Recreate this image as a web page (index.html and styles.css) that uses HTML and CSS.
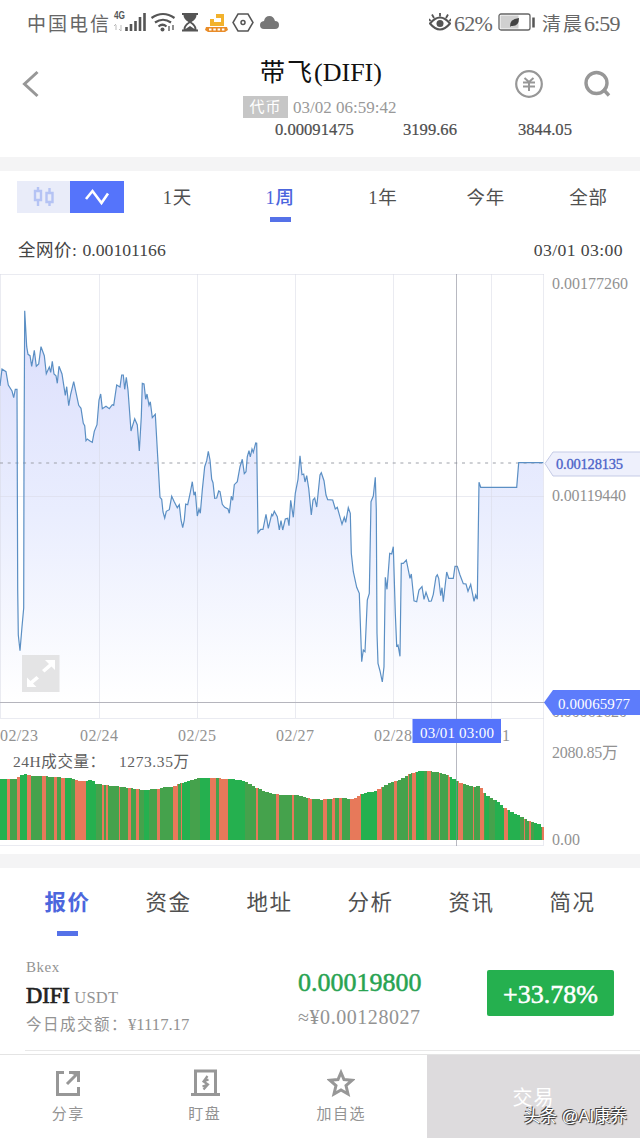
FILE: index.html
```html
<!DOCTYPE html>
<html lang="zh">
<head>
    <meta charset="UTF-8">
    <meta name="viewport" content="width=device-width, initial-scale=1.0">
    <title>带飞(DIFI)</title>
    <link rel="stylesheet" href="styles.css">
</head>
<body>
<div class="status-bar">
    <span class="carrier">中国电信</span>
    <svg class="status-icons" width="168" height="26" viewBox="0 0 168 26">
        <!--信号-->
        <text class="net" x="1" y="10" textLength="11" lengthAdjust="spacingAndGlyphs">4G</text>
        <path d="M3 16v5M1 17l2-2M8 16v6M6 20l2 2" stroke="#bbb" fill="none"/>
        <path d="M13.500 18v4M18 15v7M22.500 12v10M27 8v14M31.500 4v18" stroke="#555" stroke-width="2.600"/>
        <!--无线-->
        <g fill="none" stroke="#555" stroke-width="2.200">
            <path d="M38.500 9q11.500-8 23 0M42 13.500q8-5.500 16 0M45.500 17.500q4-3.500 8 0"/>
            <path d="M56 17v5M60 16v5" stroke-width="1.300"/>
        </g>
        <circle cx="49.500" cy="20.500" r="2" fill="#555"/>
        <path d="M69 4h16v2h-1.500q0 4-5 7 5 3 5 7.500H85v2H69v-2h1.500q0-4.500 5-7.500-5-3-5-7H69z" fill="#555"/>
        <path d="M72.500 20q0-3 4.500-6 4.500 3 4.500 6l-4.500-3z" fill="#fff"/>
        <!--推土机-->
        <path d="M97 10h4v3h7V9h-5V5h8v12H97z" fill="#f2b22d"/>
        <path d="M93 18h21l1 3-3 2H95l-3-2z" fill="#e98c28"/>
        <path d="M96 20.500h16" stroke="#fff" stroke-width="2" stroke-dasharray="2.500 1.800"/>
        <path d="M125 5h10l5 8.500-5 8.500h-10l-5-8.500z" fill="none" stroke="#555" stroke-width="1.500"/>
        <circle cx="130" cy="13.500" r="2" fill="none" stroke="#555" stroke-width="1.500"/>
        <path d="M151 20q-4 0-4-4 0-3.500 4-4 1-5 5.500-5 4 0 5.500 5 4 0 4 4t-4 4z" fill="#777"/>
    </svg>
    <svg class="eye" width="22" height="20" viewBox="0 0 22 20">
        <path d="M1 11.500q10-12 20 0-10 12-20 0z" fill="none" stroke="#555" stroke-width="2"/>
        <circle cx="11" cy="11.500" r="3.500" fill="#555"/>
        <path d="M11 4.500V1M5 6L3 2.500M17 6l2-3.500M1.500 9L0 7M20.500 9L22 7" stroke="#555" stroke-width="1.800"/>
    </svg>
    <span class="percent">62%</span>
    <svg class="battery" width="37" height="18" viewBox="0 0 37 18">
        <rect x="1" y="1" width="31" height="16" rx="2" fill="#fff" stroke="#666" stroke-width="1.300"/>
        <rect x="2.500" y="2.500" width="18" height="13" fill="#d0d0d0"/>
        <path d="M12 14q-1-8 9-9 0 9-8 8z" fill="#444"/>
        <path d="M35.500 4.500v10" stroke="#555" stroke-width="2.500"/>
    </svg>
    <span class="clock"><i>清晨</i>6:59</span>
</div>

<div class="header">
    <svg class="back" width="18" height="28" viewBox="0 0 18 28">
        <path d="M15.500 2L2.500 14l13 12" fill="none" stroke="#979797" stroke-width="3"/>
    </svg>
    <div class="title-box">
        <h1><i>带飞</i>(DIFI)</h1>
        <p><span class="stamp">代币</span><span class="date">03/02 06:59:42</span></p>
    </div>
    <svg class="coin" width="28" height="28" viewBox="0 0 28 28">
        <g fill="none" stroke="#979797">
            <circle cx="14" cy="14" r="12.800" stroke-width="2.200"/>
            <path d="M9.500 8l4.500 4 4.500-4M8 12.500h12M8 16.500h12M14 12v9" stroke-width="2"/>
        </g>
    </svg>
    <svg class="search" width="27" height="28" viewBox="0 0 27 28">
        <g fill="none" stroke="#979797" stroke-width="3.400">
            <circle cx="12.500" cy="13" r="10.500"/>
            <path d="M19 19l6 6.500"/>
        </g>
    </svg>
</div>
<div class="stats">
    <span>0.00091475</span>
    <span>3199.66</span>
    <span>3844.05</span>
</div>
<div class="band"></div>

<div class="range-bar">
    <div class="toggle">
        <span>
            <svg width="22" height="22" viewBox="0 0 22 22">
                <g fill="none" stroke="#b5c3f4" stroke-width="2.400">
                    <path d="M5 1v4M5 14v6M2 5h6v9H2zM16.500 2v5M16.500 16v4M13.500 7h6v9h-6z"/>
                </g>
            </svg>
        </span>
        <span class="on">
            <svg width="26" height="20" viewBox="0 0 26 20">
                <path d="M2 12l6.500-8 9 12L24 6.500" fill="none" stroke="#fff" stroke-width="2.600"/>
            </svg>
        </span>
    </div>
    <ul class="tabs">
        <li>1天</li>
        <li class="active">1周</li>
        <li>1年</li>
        <li>今年</li>
        <li>全部</li>
    </ul>
</div>
<div class="price-line">
    <span><i>全网价:</i> 0.00101166</span>
    <span class="time">03/01 03:00</span>
</div>

<svg class="chart" width="640" height="580" viewBox="0 274 640 580">
    <defs>
        <linearGradient id="fade" gradientUnits="userSpaceOnUse" x1="0" y1="320" x2="0" y2="700">
            <stop offset="0" stop-color="#dcdffc"/>
            <stop offset="0.500" stop-color="#e9edfe"/>
            <stop offset="1" stop-color="#fff"/>
        </linearGradient>
    </defs>
    <path id="area" fill="url(#fade)"/>
    <path class="grid" d="M0 274.500H544M0 496.500H544M0 718.500H544M0 845.500H544M.5 274V718M99.500 274V718M197.500 274V718M295.500 274V718M393.500 274V718M491.500 274V718M543.500 274V845"/>
    <path d="M0 463H544" stroke="#9da0a8" stroke-dasharray="3 4.700"/>
    <path id="line" fill="none" stroke="#5b8fc4" stroke-width="1.200"/>
    <g id="bars" shape-rendering="crispEdges"></g>
    <path d="M456.500 274V846" stroke="#888a98" stroke-opacity="0.600"/>
    <path d="M0 702.500H545" stroke="#b5b5bd"/>

    <!--全屏按钮-->
    <rect x="22" y="655" width="37.500" height="37" fill="#dfdfe0" opacity="0.850"/>
    <path d="M45 660h10v10l-3.500-3.500-7 6-2.500-2.500 7-6zM36.500 687H27V677.500l3.500 3.500 6-5 2.500 2.500-6 5z" fill="#fff"/>

    <g class="axis">
        <text x="552" y="289" textLength="76">0.00177260</text>
        <text x="552" y="501" textLength="74">0.00119440</text>
        <text x="552" y="717" textLength="75">0.00061620</text>
        <text x="552" y="758" textLength="66">2080.85万</text>
        <text x="552" y="845" textLength="28">0.00</text>
        <text x="0" y="741" textLength="38">02/23</text>
        <text x="80" y="741" textLength="38">02/24</text>
        <text x="178" y="741" textLength="38">02/25</text>
        <text x="276" y="741" textLength="38">02/27</text>
        <text x="374" y="741" textLength="38">02/28</text>
        <text x="472" y="741" textLength="38">03/01</text>
        <text class="volume" x="13" y="767" textLength="92">24H成交量：</text>
        <text class="volume" x="119" y="767" textLength="70">1273.35万</text>
    </g>
    <path d="M545 463.500L553 452H641V476H553z" fill="#eef0fc" stroke="#c5cbe6"/>
    <text class="mark blue" x="556" y="469" textLength="67">0.00128135</text>
    <path d="M544 702.500L553 690H640V715H553z" fill="#5d7cfb"/>
    <text class="mark" x="558" y="709" textLength="72">0.00065977</text>
    <rect x="412.500" y="719" width="88.500" height="24" fill="#5574fb"/>
    <text class="mark" x="420" y="738" textLength="74">03/01 03:00</text>
</svg>
<div class="band"></div>

<ul class="tabs main-tabs">
    <li class="active">报价</li>
    <li>资金</li>
    <li>地址</li>
    <li>分析</li>
    <li>资讯</li>
    <li>简况</li>
</ul>

<div class="quote">
    <div class="pair">
        <p class="exchange">Bkex</p>
        <p class="symbol"><b>DIFI</b> USDT</p>
        <p class="turnover"><i>今日成交额：</i>¥1117.17</p>
    </div>
    <div class="price">
        <p class="now">0.00019800</p>
        <p class="cny">≈¥0.00128027</p>
    </div>
    <span class="change">+33.78%</span>
</div>

<div class="footer">
    <div class="action">
        <svg width="26" height="28" viewBox="0 0 26 28">
            <path d="M9 3.500H2.500v22h21V18M22 5L12 15" fill="none" stroke="#979797" stroke-width="3"/>
            <path d="M14 2h11v11h-3V7l-5-2h-3z" fill="#979797"/>
        </svg>
        <span>分享</span>
    </div>
    <div class="action">
        <svg width="30" height="28" viewBox="0 0 30 28">
            <path d="M5.500 25V2h20v23M1 25.500h29" fill="none" stroke="#979797" stroke-width="3"/>
            <path d="M17.500 7l-4 5.500 4.500 3-4.500 5M18.500 10.500l-5 2M18 15.500l-5.500 2" fill="none" stroke="#979797" stroke-width="2.200"/>
        </svg>
        <span>盯盘</span>
    </div>
    <div class="action">
        <svg width="28" height="28" viewBox="0 0 28 28">
            <path d="M14 3.500l3 7 8 .8-6 5.200 2 8.500-7-4-7 4 2-8.500-6-5.200 8-.8z" fill="none" stroke="#979797" stroke-width="3"/>
        </svg>
        <span>加自选</span>
    </div>
    <div class="trade">交易</div>
    <span class="watermark">头条 @AI康养</span>
</div>
<script src="chart.js"></script>
</body>
</html>
```
FILE: styles.css
```css
* {
    margin: 0;
    padding: 0;
    box-sizing: border-box;
}

body {
    width: 640px;
    height: 1138px;
    overflow: hidden;
    background: #fff;
    color: #505050;
    font-family: "Liberation Serif", "Noto Sans CJK SC", serif;
    font-weight: 400;
}

svg {
    display: block;
    flex: none;
}

i {
    font-style: normal;
}

ul {
    list-style: none;
}

.status-bar {
    display: flex;
    align-items: center;
    height: 44px;
    padding-left: 27px;
    color: #666;
    white-space: nowrap;
}

.carrier {
    width: 86px;
    font-size: 19px;
    letter-spacing: 2px;
}

.status-icons {
    margin-top: -1px;
}

.net {
    font: bold 10px "Liberation Sans", sans-serif;
    fill: #555;
}

.eye {
    margin-left: 148px;
}

.percent {
    width: 40px;
    margin: 3px 0 0 3px;
    font-size: 22px;
    letter-spacing: -0.700px;
}

.battery {
    margin-left: 4px;
}

.clock {
    margin: 2px 0 0 7px;
    font-size: 22px;
    letter-spacing: -0.900px;
}

.clock i {
    font-size: 19px;
    letter-spacing: 2px;
}

.header {
    display: flex;
    height: 76px;
}

.back {
    margin: 26px 0 0 22px;
}

.title-box {
    width: 300px;
    margin-left: 131px;
    text-align: center;
}

h1 {
    height: 52px;
    color: #111;
    font-size: 26px;
    font-weight: 400;
    line-height: 58px;
}

h1 i {
    font-size: 25px;
    letter-spacing: 2px;
}

.title-box p {
    display: flex;
    align-items: center;
    gap: 5px;
    padding-left: 72px;
}

.stamp {
    width: 45px;
    height: 22px;
    background: #c6c6c6;
    color: #fff;
    font-size: 15px;
    letter-spacing: 1px;
    line-height: 23px;
}

.date {
    padding-top: 2px;
    color: #999;
    font-size: 17px;
}

.coin {
    margin: 26px 0 0 44px;
}

.search {
    margin: 26px 0 0 41px;
}

.stats {
    display: flex;
    height: 37px;
    padding-left: 275px;
    font-size: 16.600px;
    line-height: 19px;
    -webkit-text-stroke: 0.200px #444;
}

.stats span:nth-child(1) {
    width: 128px;
}

.stats span:nth-child(2) {
    width: 115px;
}

.band {
    height: 14px;
    background: #f4f4f5;
}

.range-bar {
    display: flex;
    height: 55px;
}

.toggle {
    display: flex;
    width: 107px;
    height: 32px;
    margin: 10px 2px 0 17px;
}

.toggle span {
    display: flex;
    align-items: center;
    justify-content: center;
    width: 53px;
    background: #e9ecf9;
}

.toggle .on {
    width: 54px;
    background: #5574fb;
}

.tabs {
    display: flex;
    flex: 1;
}

.tabs li {
    display: flex;
    flex: 1;
    flex-direction: column;
    align-items: center;
    font-size: 18.500px;
    letter-spacing: 0.800px;
    line-height: 46px;
    padding-top: 4px;
}

.tabs .active {
    color: #4c66dd;
    font-weight: 500;
}

.tabs .active::after {
    content: "";
    width: 21px;
    height: 5px;
    margin-top: -4px;
    background: #5571e8;
}

.price-line {
    display: flex;
    justify-content: space-between;
    height: 48px;
    padding: 0 17px 0 18px;
    font-size: 17.700px;
    line-height: 48px;
}

.price-line span {
    color: #444;
}

.price-line i {
    display: inline-block;
    width: 60px;
    font-size: 17.500px;
    letter-spacing: 0.500px;
}

.price-line .time {
    letter-spacing: 0.380px;
}

.grid {
    fill: none;
    stroke: #d9dae6;
    stroke-opacity: 0.550;
}

.axis {
    fill: #929292;
    font-size: 16px;
}

.axis .volume {
    fill: #606060;
    font-size: 15.500px;
}

.mark {
    fill: #fff;
    font-size: 15px;
}

.mark.blue {
    fill: #4a62c8;
    stroke: #4a62c8;
    stroke-width: 0.300px;
    font-size: 14.500px;
}

.main-tabs {
    height: 83px;
    padding: 0 17px;
}

.main-tabs li {
    padding-top: 7px;
    font-size: 21.500px;
    letter-spacing: 1.500px;
    line-height: 56px;
}

.main-tabs .active {
    font-weight: 700;
}

.main-tabs .active::after {
    margin-top: 0;
}

.quote {
    display: flex;
    height: 100px;
    margin-left: 25px;
    border-bottom: 1px solid #e8e8e8;
    color: #939393;
    white-space: nowrap;
}

.pair {
    width: 273px;
    padding: 6px 0 0 1px;
}

.exchange {
    font-size: 15px;
    line-height: 20px;
    letter-spacing: 0.500px;
}

.symbol {
    font-size: 16.500px;
    line-height: 38px;
    letter-spacing: 0.300px;
}

.symbol b {
    color: #222;
    font-size: 22.500px;
    font-weight: 400;
    letter-spacing: 0;
    -webkit-text-stroke: 0.700px #222;
}

.turnover {
    font-size: 16.700px;
    line-height: 16px;
}

.turnover i {
    display: inline-block;
    width: 102px;
    font-size: 15.500px;
    letter-spacing: 1.500px;
}

.price {
    width: 189px;
    padding-top: 15px;
}

.now {
    color: #28a352;
    font-size: 26px;
    line-height: 34px;
    -webkit-text-stroke: 0.500px #28a352;
}

.cny {
    font-size: 20px;
    letter-spacing: 0.550px;
    line-height: 34px;
}

.change {
    width: 127px;
    height: 46px;
    margin-top: 19px;
    border-radius: 2px;
    background: #25b04f;
    color: #fff;
    font-size: 26px;
    line-height: 50px;
    text-align: center;
    -webkit-text-stroke: 0.500px #fff;
}

.footer {
    display: flex;
    position: relative;
    height: 85px;
    margin-top: 3px;
    border-top: 1px solid #e4e4e4;
}

.action {
    display: flex;
    flex-direction: column;
    align-items: center;
    width: 136.500px;
    padding-top: 14px;
    color: #939393;
    font-size: 15px;
    letter-spacing: 1.500px;
    line-height: 35px;
}

.trade {
    width: 213px;
    margin-left: auto;
    background: #dddbdd;
    color: #fff;
    font-size: 20px;
    letter-spacing: 1px;
    line-height: 86px;
    text-align: center;
}

.watermark {
    position: absolute;
    right: 13px;
    top: 49px;
    color: #fff;
    font: 16.500px/25px "Liberation Sans", "Noto Sans CJK SC", sans-serif;
    text-shadow: -1px -1px 0 #444, 1px 1px 1px #222;
}
```
FILE: chart.js
```js
// 价格走势，每段坐标以 1/3 像素为单位
const segments = [
    {
        x: 0, y: 290, points: "0,288 6,237 18,245 25,285 36,303 41,323 46,298 51,298 53,900 55,1035 60,1082 66,1010 71,954 72,500 74,62 80,170 84,193 90,197 95,229 103,181 109,229 116,222 123,170 133,197 139,251 148,231 152,247 157,214 162,252 168,257 172,280 177,229 186,252 196,316 200,290 206,347 212,312 221,275 236,346 243,355 250,400 254,407 258,452 262,447 270,453 277,457 283,424 291,404 297,330 302,312 307,356 318,349 328,356 337,344 341,346 350,285 360,291 365,255 370,255 374,298 379,262 384,300 393,423 404,386 412,405 418,483 424,380 427,280 432,282 437,328 441,312 447,346 451,335 457,383 466,373 473,500 480,622 485,628 489,666 494,684 499,664 508,659 515,619 522,634 532,653 538,644 543,690 548,713 553,690 557,642 563,644 570,612 577,575 582,616 586,605 592,678 597,657 601,670 607,600 614,530 620,512 625,484 630,510 635,568 639,578 644,625 650,624 656,603 660,605 667,643 674,652 684,657 688,670 694,619 698,631 703,584 712,575 720,530 727,508 733,551 738,545 742,500 747,482 751,501 756,477 760,487 767,459"
    },
    {
        x: 240, y: 400, points: "50,130 54,398 62,388 69,388 78,343 85,385 95,343 98,347 103,334 112,350 118,390 123,362 128,390 136,357 143,355 147,377 152,301 160,352 166,280 174,238 180,167 186,224 191,222 195,246 200,227 206,265 214,345 219,300 224,294 230,321 240,225 244,218 252,242 258,285 263,299 278,300 286,327 292,322 306,373 313,352 317,367 325,323 331,340 334,460 340,515 350,562 358,580 362,700 365,785 370,750 375,755 382,600 388,580 393,305 400,288 406,232 409,330 411,700 414,790 420,813 427,846 432,800 436,532 441,568 449,460 455,462 460,440 466,640 470,738 474,735 480,769 484,490 490,490 499,480 510,535 514,522 522,602 530,605 537,570 546,560 552,598 558,577 567,604 574,603 580,583 588,530 592,524 596,535 602,587 606,563 610,605 620,516 626,535 640,535 645,499 652,499 660,525 670,551 678,552 684,574 692,553 702,604 707,585 712,598 717,247 722,262 830,262 836,188 910,188"
    }
];
const line = segments.map(s => s.points.split(" ").map(p => {
    const [x, y] = p.split(",");
    return (s.x + x / 3).toFixed(1) + " " + (s.y + y / 3).toFixed(1);
}).join("L")).join("L");
document.getElementById("line").setAttribute("d", "M" + line);
document.getElementById("area").setAttribute("d", "M" + line + "V702H0Z");

// 成交量轮廓：[x, 顶部 y]
const tops = [[0, 779.3], [17, 778.7], [20, 775], [25, 774.3], [30, 775.7], [53, 776.7], [70, 778], [78, 780.7], [93, 780.3], [96, 784], [113, 785.7], [127, 787.7], [143, 789.7], [155, 789.3], [163, 787.3], [173, 786.7], [178, 784], [187, 781], [200, 778], [233, 778.7], [247, 782.3], [257, 788.3], [270, 792.7], [280, 795], [297, 794.7], [307, 798], [320, 799.7], [340, 797.7], [352, 799.3], [362, 794.3], [378, 790], [387, 784.3], [400, 779.3], [410, 773.3], [425, 770.3], [435, 771.7], [447, 775.3], [460, 782.3], [475, 786.7], [479, 785.3], [485, 794], [497, 801], [507, 809.3], [520, 816], [533, 822.7], [538, 823.7], [544, 827.7]];
// 下跌和放量区间，其余为普通上涨
const down = [[6.7, 10.3], [16.7, 19.7], [26.7, 31], [42.3, 45.7], [54, 56.7], [60.7, 65], [75, 86], [101.7, 103.7], [106.3, 107.7], [119, 120.3], [128, 131], [136, 138.7], [156.7, 160], [173, 177.7], [180.7, 182.3], [210, 215.7], [219.3, 228.3], [256, 258], [276, 279], [292.3, 294], [307.7, 311.7], [322.7, 327.3], [332, 335], [338.7, 341.7], [350, 361], [377.3, 382], [394, 397], [408, 409.3], [412.3, 416], [426.7, 430.7], [439, 440], [448.3, 450], [458.3, 462.7], [473, 474.3], [480, 484.3], [504.3, 507.7], [524, 525.3], [529.3, 531.3], [541.7, 544]];
const rise = [[0, 6.7], [19.7, 26.7], [65, 71], [86, 96], [144, 149], [182.3, 190], [200, 210], [228.3, 245], [361, 377.3], [416, 424], [450, 458.3], [485, 489], [495, 504], [508, 520], [534, 541]];

function topAt(x) {
    for (let i = 1; i < tops.length; i++) {
        const [x0, y0] = tops[i - 1];
        const [x1, y1] = tops[i];
        if (x <= x1)
            return y0 + (y1 - y0) * (x - x0) / (x1 - x0);
    }
    return tops[tops.length - 1][1];
}

function inside(list, x) {
    return list.some(r => x >= r[0] && x < r[1]);
}

let cuts = [0, 544];
for (let x = 3.4; x < 544; x += 3.4)
    cuts.push(x);
down.concat(rise).forEach(r => cuts.push(r[0], r[1]));
cuts = [...new Set(cuts)].sort((a, b) => a - b);
let bars = "";
for (let i = 1; i < cuts.length; i++) {
    const x = cuts[i - 1];
    const mid = (x + cuts[i]) / 2;
    const color = inside(down, mid) ? "#e7795a" : inside(rise, mid) ? "#25b04f" : "#45a24c";
    // 以 3.4 像素为一档取高度，保留阶梯
    const y = topAt(Math.floor(mid / 3.4) * 3.4 + 1.7);
    bars += `<rect x="${x}" y="${y.toFixed(1)}" width="${(cuts[i] - x + 0.1).toFixed(2)}" height="${(839.5 - y).toFixed(1)}" fill="${color}"/>`;
}
document.getElementById("bars").innerHTML = bars;
```
